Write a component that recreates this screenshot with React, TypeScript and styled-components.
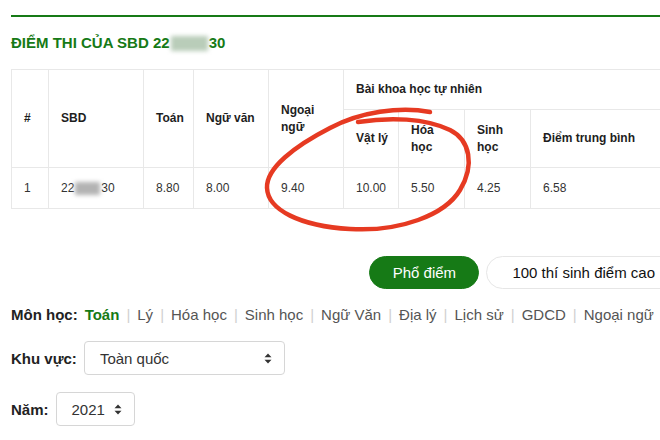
import React from "react";
import styled, { createGlobalStyle } from "styled-components";

const GREEN = "#167a16";

const Global = createGlobalStyle`
  html, body { margin: 0; padding: 0; background: #fff; overflow: hidden; }
  body { font-family: "Liberation Sans", Arial, Helvetica, sans-serif; color: #222; }
`;

const Page = styled.div`
  position: relative;
  width: 670px;
  padding: 15px 0 0 11px;
`;

const Rule = styled.div`
  height: 2px;
  background: ${GREEN};
`;

const Title = styled.h2`
  margin: 17px 0 0;
  font-size: 15px;
  line-height: 18px;
  font-weight: 700;
  color: ${GREEN};
  display: flex;
  align-items: center;
`;

const Blur = styled.span<{ $w: number; $h: number; $c: string }>`
  display: inline-block;
  width: ${(p) => p.$w}px;
  height: ${(p) => p.$h}px;
  background: ${(p) => p.$c};
  filter: blur(2px);
  margin: 0 1px;
`;

const Table = styled.table`
  margin-top: 17px;
  width: 670px;
  border-collapse: collapse;
  table-layout: fixed;
`;

const Tr = styled.tr<{ $h: number }>`
  height: ${(p) => p.$h}px;
`;

const Th = styled.th`
  border: 1px solid #e8e8e8;
  padding: 0 12px;
  text-align: left;
  vertical-align: middle;
  font-size: 12px;
  line-height: 17px;
  font-weight: 700;
  color: #1e1e1e;
  white-space: nowrap;
`;

const Td = styled.td`
  border: 1px solid #e8e8e8;
  padding: 0 12px;
  vertical-align: middle;
  font-size: 12px;
  color: #333;
  white-space: nowrap;
`;

const Sbd = styled.span`
  display: inline-flex;
  align-items: center;
`;

const ButtonRow = styled.div`
  margin-top: 47px;
  display: flex;
  justify-content: flex-end;
  gap: 7px;
`;

const Pill = styled.button<{ $primary?: boolean }>`
  height: 33px;
  border-radius: 17px;
  font-family: inherit;
  font-size: 15px;
  white-space: nowrap;
  padding: ${(p) => (p.$primary ? "0" : "0 25px")};
  border: 1px solid ${(p) => (p.$primary ? GREEN : "#e6e6e6")};
  background: ${(p) => (p.$primary ? GREEN : "#fff")};
  color: ${(p) => (p.$primary ? "#fff" : "#111")};
  width: ${(p) => (p.$primary ? "110px" : "auto")};
`;

const SubjectRow = styled.div`
  margin-top: 16px;
  display: flex;
  align-items: center;
  font-size: 15px;
  line-height: 20px;
  color: #555;
`;

const Label = styled.span`
  font-weight: 700;
  color: #222;
  font-size: 15px;
  margin-right: 7px;
`;

const Subject = styled.span<{ $active?: boolean }>`
  color: ${(p) => (p.$active ? GREEN : "#555")};
  font-weight: ${(p) => (p.$active ? 700 : 400)};
  white-space: nowrap;
`;

const Sep = styled.span`
  color: #d0d0d0;
  margin: 0 7px;
`;

const FieldRow = styled.div<{ $mt: number }>`
  margin-top: ${(p) => p.$mt}px;
  display: flex;
  align-items: center;
`;

const Select = styled.div<{ $w: number }>`
  width: ${(p) => p.$w}px;
  height: 34px;
  box-sizing: border-box;
  border: 1px solid #d6d6d6;
  border-radius: 4px;
  display: flex;
  align-items: center;
  justify-content: space-between;
  padding: 0 12px 0 15px;
  font-size: 15px;
  color: #333;
`;

const Overlay = styled.svg`
  position: absolute;
  left: 0;
  top: 0;
  width: 660px;
  height: 440px;
  pointer-events: none;
`;

const Arrows = () => (
  <svg width="8" height="11" viewBox="0 0 8 11">
    <path d="M4 0.5 L7.5 4.3 H0.5 Z M4 10.5 L7.5 6.7 H0.5 Z" fill="#333" />
  </svg>
);

const subjects = ["Toán", "Lý", "Hóa học", "Sinh học", "Ngữ Văn", "Địa lý", "Lịch sử", "GDCD", "Ngoại ngữ"];

export default function App() {
  return (
    <>
      <Global />
      <Page>
        <Rule />
        <Title>
          ĐIỂM THI CỦA SBD 22
          <Blur $w={37} $h={15} $c="#b9cdb9" />
          30
        </Title>
        <Table>
          <colgroup>
            <col style={{ width: 37 }} />
            <col style={{ width: 95 }} />
            <col style={{ width: 50 }} />
            <col style={{ width: 75 }} />
            <col style={{ width: 75 }} />
            <col style={{ width: 55 }} />
            <col style={{ width: 66 }} />
            <col style={{ width: 66 }} />
            <col style={{ width: 151 }} />
          </colgroup>
          <thead>
            <Tr $h={40}>
              <Th rowSpan={2}>#</Th>
              <Th rowSpan={2}>SBD</Th>
              <Th rowSpan={2}>Toán</Th>
              <Th rowSpan={2}>Ngữ văn</Th>
              <Th rowSpan={2}>
                Ngoại
                <br />
                ngữ
              </Th>
              <Th colSpan={4}>Bài khoa học tự nhiên</Th>
            </Tr>
            <Tr $h={58}>
              <Th>Vật lý</Th>
              <Th>
                Hóa
                <br />
                học
              </Th>
              <Th>
                Sinh
                <br />
                học
              </Th>
              <Th>Điểm trung bình</Th>
            </Tr>
          </thead>
          <tbody>
            <Tr $h={41}>
              <Td>1</Td>
              <Td>
                <Sbd>
                  22
                  <Blur $w={25} $h={13} $c="#b3b3b3" />
                  30
                </Sbd>
              </Td>
              <Td>8.80</Td>
              <Td>8.00</Td>
              <Td>9.40</Td>
              <Td>10.00</Td>
              <Td>5.50</Td>
              <Td>4.25</Td>
              <Td>6.58</Td>
            </Tr>
          </tbody>
        </Table>
        <ButtonRow>
          <Pill $primary>Phổ điểm</Pill>
          <Pill>100 thí sinh điểm cao</Pill>
        </ButtonRow>
        <SubjectRow>
          <Label>Môn học:</Label>
          {subjects.map((s, i) => (
            <React.Fragment key={s}>
              {i > 0 && <Sep>|</Sep>}
              <Subject $active={i === 0}>{s}</Subject>
            </React.Fragment>
          ))}
        </SubjectRow>
        <FieldRow $mt={16}>
          <Label>Khu vực:</Label>
          <Select $w={201}>
            <span>Toàn quốc</span>
            <Arrows />
          </Select>
        </FieldRow>
        <FieldRow $mt={17}>
          <Label>Năm:</Label>
          <Select $w={79}>
            <span>2021</span>
            <Arrows />
          </Select>
        </FieldRow>
        <Overlay viewBox="0 0 660 440">
          <path
            d="M 430 112 C 400 106, 360 112, 330 128 C 295 146, 266 168, 267 188 C 268 210, 300 226, 350 229 C 400 232, 445 215, 460 190 C 475 165, 470 140, 450 130 C 425 118, 390 117, 358 122"
            fill="none"
            stroke="#e63a22"
            strokeWidth={4.5}
            strokeLinecap="round"
          />
        </Overlay>
      </Page>
    </>
  );
}
